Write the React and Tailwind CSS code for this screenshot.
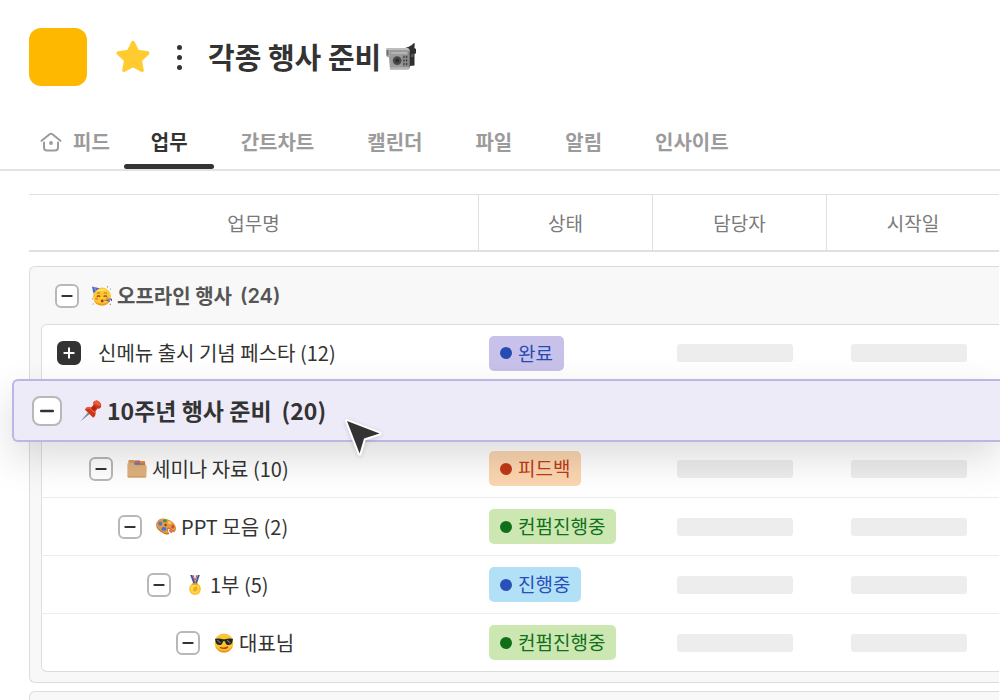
import React from 'react';
import { Minus, Plus } from 'lucide-react';

const TABS = ['업무', '간트차트', '캘린더', '파일', '알림', '인사이트'];

const STATUS_STYLES = {
    완료: { box: 'bg-[#c8c2ea] text-[#274bb5]', dot: 'bg-[#274bb5]' },
    피드백: { box: 'bg-[#fbd6b0] text-[#c03a16]', dot: 'bg-[#c03a16]' },
    컨펌진행중: { box: 'bg-[#cce7b2] text-[#10701a]', dot: 'bg-[#10701a]' },
    진행중: { box: 'bg-[#b2e1f7] text-[#294fb9]', dot: 'bg-[#294fb9]' },
};

const ROW_GRID = 'grid grid-cols-[minmax(0,1fr)_174px_174px_173px]';

function StarIcon() {
    return (
        <svg viewBox="0 0 34 34" className="size-[34px]">
            <path
                d="M17 2.6L21.4 11.6L31.6 13.1L24.2 20.2L26 30.2L17 25.4L8 30.2L9.8 20.2L2.4 13.1L12.6 11.6Z"
                fill="#ffcb2e"
                stroke="#ffcb2e"
                strokeWidth="3.6"
                strokeLinejoin="round"
            />
        </svg>
    );
}

function HomeIcon() {
    return (
        <svg viewBox="0 0 22 20" className="h-5 w-[22px]" fill="none" stroke="currentColor" strokeWidth="2" strokeLinecap="round" strokeLinejoin="round">
            <path d="M1.5 8.8L9.6 2.3Q11 1.3 12.4 2.3L20.5 8.8" />
            <path d="M4 10.5V15.5Q4 18.5 7 18.5H15Q18 18.5 18 15.5V10.5" />
            <circle cx="11" cy="11" r="1.9" fill="currentColor" stroke="none" />
        </svg>
    );
}

function CameraIcon() {
    return (
        <svg viewBox="0 0 30 28" className="h-7 w-[30px]">
            <path d="M15 6Q24 4.5 28 0L28.8 .6L28.4 5L30 6V10.5L24 11L22 7Z" fill="#303030" />
            <path d="M23 9H28.5V22.5L24 23Z" fill="#2f2f2f" />
            <path d="M25 11H27.5V14H25Z" fill="#585858" />
            <path d="M.6 5H22L24 7.5V25L22.5 26.5H4L3 14.5L.6 13.5Z" fill="#9b9b9b" />
            <path d="M.6 5H22L23.6 7H3.4V13.8L.6 13Z" fill="#bdbdbd" />
            <path d="M.6 7H2.6V12.6H.6Z" fill="#6d6d6d" />
            <rect x="5" y="9" width="16" height="2" fill="#b4b4b4" />
            <circle cx="11.2" cy="17.6" r="4.4" fill="#4a4a4a" />
            <circle cx="11.2" cy="17.6" r="2" fill="#2d2d2d" />
            <rect x="16.4" y="12" width="5.6" height="11.6" fill="#858585" />
            <path d="M17.4 14H18.6M20 14H21.2M17.4 17.6H18.6M20 17.6H21.2M17.4 21H18.6M20 21H21.2" stroke="#2b2b2b" strokeWidth="1.5" />
            <path d="M4 24.2H23.8L22.5 26.5H4.2Z" fill="#b5b5b5" />
            <path d="M22.6 8.5H24V24H22.6Z" fill="#707070" />
        </svg>
    );
}

function PartyIcon() {
    return (
        <svg viewBox="0 0 20 20" className="size-5">
            <circle cx="10" cy="10.6" r="9" fill="#fdc72f" />
            <path d="M1.8 14.5Q4.5 19.6 10 19.6Q15.5 19.6 18.2 14.5Q14.5 18 10 17.8Q5.6 17.8 1.8 14.5Z" fill="#ee9c1e" />
            <path d="M4 5.6Q9.5 1 16 4.6Q10 4 4 5.6Z" fill="#ffe590" />
            <path d="M0 .4L7.6 2.2Q3.6 4 1.4 7.4Z" fill="#4d68c9" />
            <path d="M2.2 1.2L4 4.6" stroke="#8fa7ed" strokeWidth="1" />
            <path d="M5 7.4Q6.5 6.4 8.2 7.2M11.8 7.2Q13.5 6.4 15 7.4" stroke="#b8741d" fill="none" />
            <path d="M4.8 10.6Q6.5 9.3 8.2 10.6M11.6 10.6Q13.3 9.3 15 10.6" stroke="#8c3a14" strokeWidth="1.3" fill="none" />
            <circle cx="4.6" cy="12.8" r="1.4" fill="#f38b37" />
            <circle cx="15.4" cy="12.6" r="1.4" fill="#f38b37" />
            <circle cx="10.2" cy="15" r="1.4" fill="#a8371b" />
            <path d="M11.4 14L17.5 13.4L18 16Z" fill="#536cc5" />
            <path d="M17.4 13.2Q20.5 12.5 19.5 15" stroke="#4157b4" strokeWidth="1.3" fill="none" />
            <path d="M15 .8H16M.6 18H1.6M17.8 18.4H18.8" stroke="#df5432" strokeWidth="1.2" />
            <path d="M18 3H19M.2 12.8H1" stroke="#50a5d0" strokeWidth="1.2" />
        </svg>
    );
}

function PinIcon() {
    return (
        <svg viewBox="0 0 22 22" className="size-[22px]">
            <path d="M.4 21.6L9 11L11 13Z" fill="#8291a5" />
            <path d="M13.2 2.2Q15.6 -.6 19 1.4Q22.4 4 20.7 7.4Q19.4 9 17.6 8.6L15.4 11.6Q16.4 16.2 13.2 17.8L4.8 9.4Q7 6.2 11 7.4L13.4 5Z" fill="#ce3519" />
            <path d="M13.2 2.2Q15.6 -.6 19 1.4L20.8 3.4Q21.2 6 19.4 6.2L15 4.2Z" fill="#ec5c38" />
            <path d="M6 8.6Q8.6 7.4 10.6 8.8L14.6 12.8" stroke="#ec5c38" strokeWidth="1.4" fill="none" />
            <path d="M11.4 8.4L14 5.4L16.4 8.2L13.8 11Z" fill="#ae2713" />
        </svg>
    );
}

function FolderIcon() {
    return (
        <svg viewBox="0 0 20 20" className="size-5">
            <path d="M1.4 2Q1.4 1 2.4 1H7L8 2.4H18V8H1.4Z" fill="#d39c62" />
            <path d="M7.6 1.6H13V3.4H7.6ZM13.8 4.4H18.4V5.8H13.8Z" fill="#df5a3a" />
            <path d="M7.4 3.8H13.4V5.8H7.4Z" fill="#527dcd" />
            <path d="M13 2.2H18V3.8H13Z" fill="#e7834a" />
            <path d="M.4 5.4Q.4 4 1.6 4H6.4L8 6.2H18.6Q19.8 6.2 19.7 7.6L19.4 17Q19.3 18.6 17.8 18.6H2Q.5 18.6 .4 17Z" fill="#dfb17c" />
            <path d="M.5 17H19.4Q19.3 18.6 17.8 18.6H2Q.6 18.6 .5 17Z" fill="#d3a06a" />
        </svg>
    );
}

function PaletteIcon() {
    return (
        <svg viewBox="0 0 20 20" className="size-5">
            <path d="M.3 6.8Q1.6 1.6 8 2Q15.3 2.8 18.9 8.3Q21 12.6 18.6 14.8Q16.6 15.6 15 13Q12.5 10.8 11.7 13Q11.7 15 13.5 16.6Q12.5 18.4 8.5 17Q-.8 12.8 .3 6.8Z" fill="#c17531" />
            <path d="M.6 5.8Q2.4 1 8 1.5Q15.3 2.3 18.9 7.8Q20.8 12 18.5 13.6Q17 14 15.4 11.8Q12.3 9.3 11 12Q10.8 14 12.6 15.7Q11.7 17 8.3 15.7Q0 11.8 .6 5.8Z" fill="#e39a48" />
            <ellipse cx="4.2" cy="6.6" rx="2" ry="2.2" fill="#4e78c9" />
            <ellipse cx="8.9" cy="3.7" rx="2" ry="1.5" fill="#309952" />
            <ellipse cx="13.6" cy="5.7" rx="1.8" ry="1.4" fill="#f5d04a" />
            <ellipse cx="16.8" cy="9.8" rx="1.6" ry="1.7" fill="#d8472e" />
            <ellipse cx="7.9" cy="11.9" rx="2.5" ry="1.9" fill="#4774cc" />
            <circle cx="9.6" cy="8" r="1.2" fill="#864818" />
            <path d="M13.4 13L16 15.5" stroke="#d9674d" strokeWidth="2.2" />
        </svg>
    );
}

function MedalIcon() {
    return (
        <svg viewBox="0 0 20 20" className="size-5">
            <path d="M5.4 0H14.6L11.7 8.6H8.4Z" fill="#e9ecf4" />
            <path d="M5.2 0H7.2L10.4 8H8.2Z" fill="#3457a9" />
            <path d="M12.9 0H14.8L11.9 8.4H10Z" fill="#3457a9" />
            <path d="M8 0L10.4 7M12 0L10.4 5" stroke="#dc5140" strokeWidth="1" />
            <circle cx="10" cy="14" r="5.9" fill="#fac42d" />
            <circle cx="10" cy="14" r="4.2" fill="#ffda58" />
            <path d="M7.4 8.8H12.6" stroke="#d99613" strokeWidth="1.7" />
            <path d="M7.5 15.6L9 12L11.8 11L12.8 14.6L10 17Z" fill="#edad1e" />
        </svg>
    );
}

function CoolIcon() {
    return (
        <svg viewBox="0 0 20 20" className="size-5">
            <circle cx="10" cy="10" r="9.4" fill="#fbc52c" />
            <path d="M1.4 13.4Q4 19.4 10 19.4Q16 19.4 18.6 13.4Q15 17.6 10 17.6Q5 17.6 1.4 13.4Z" fill="#e8951b" />
            <path d="M1 5.8Q5.5 5 9 6.2H11Q14.5 5 19 5.8L18.6 8Q18 12 14.5 12Q11.8 12 11 8.4Q10 7.6 9 8.4Q8.2 12 5.5 12Q2 12 1.4 8Z" fill="#252525" />
            <path d="M3.2 7.2L6.6 10M13 7.2L16.2 10" stroke="#777" strokeWidth="1.1" />
            <path d="M6.6 14.6Q10 16.2 13.4 14.2" stroke="#c0391b" strokeWidth="1.6" fill="none" strokeLinecap="round" />
        </svg>
    );
}

function CursorIcon() {
    return (
        <svg viewBox="0 0 44 44" className="size-11 drop-shadow-sm" aria-hidden="true">
            <path d="M5 5L37.6 17.6L22 22.6L17.6 37.6Z" fill="#333" stroke="#fff" strokeWidth="4" paintOrder="stroke" strokeLinejoin="round" />
        </svg>
    );
}

const ROWS = [
    { name: '신메뉴 출시 기념 페스타 (12)', status: '완료', closed: true, first: true, indent: 'pl-[15px]' },
    { name: '10주년 행사 준비', count: 20, dragging: true },
    { name: '세미나 자료 (10)', status: '피드백', icon: <FolderIcon />, indent: 'pl-[47px]' },
    { name: 'PPT 모음 (2)', status: '컨펌진행중', icon: <PaletteIcon />, indent: 'pl-[76px]' },
    { name: '1부 (5)', status: '진행중', icon: <MedalIcon />, indent: 'pl-[105px]' },
    { name: '대표님', status: '컨펌진행중', icon: <CoolIcon />, indent: 'pl-[134px]' },
];

function ToggleButton({ closed, label }) {
    return (
        <button
            type="button"
            aria-label={label}
            aria-expanded={!closed}
            className={`flex size-6 shrink-0 items-center justify-center rounded-md border-2 ${
                closed ? 'border-[#333] bg-[#333] text-white' : 'border-[#b8b8b8] bg-white text-[#333]'
            }`}
        >
            {closed ? <Plus className="size-4" strokeWidth={3} /> : <Minus className="size-4" strokeWidth={3} />}
        </button>
    );
}

function StatusBadge({ status }) {
    const styles = STATUS_STYLES[status];
    return (
        <span className={`flex h-[35px] items-center gap-1.5 rounded-[5px] px-[11px] text-[19px] ${styles.box}`}>
            <span className={`size-3 rounded-full ${styles.dot}`} />
            {status}
        </span>
    );
}

function TaskRow({ row }) {
    return (
        <tr
            className={`${ROW_GRID} ml-[11px] h-[58px] border-b border-l border-[#ececec] border-l-[#dedede] bg-white last:rounded-bl-md last:border-b-[#dcdcdc] ${
                row.first ? 'rounded-tl-md border-t border-t-[#dcdcdc]' : ''
            }`}
        >
            <td className={`flex items-center ${row.indent}`}>
                <ToggleButton closed={row.closed} label={row.name} />
                {row.icon && <span className="mr-[-12px] ml-[14px]">{row.icon}</span>}
                <span className="ml-[17px] text-xl text-[#333]">{row.name}</span>
            </td>
            <td className="flex items-center pl-[11px]">
                <StatusBadge status={row.status} />
            </td>
            <td className="flex items-center pl-[25px]">
                <span className="h-[18px] w-[116px] rounded-[3px] bg-[#ededed]" />
            </td>
            <td className="flex items-center pl-[25px]">
                <span className="h-[18px] w-[116px] rounded-[3px] bg-[#ededed]" />
            </td>
        </tr>
    );
}

function DraggedRow({ row }) {
    return (
        <tr className="relative z-10 -mt-[3px] -mr-px -mb-[2px] -ml-[18px] flex h-[63px] rounded-l-md border-y-2 border-l-2 border-[#c0b4e5] bg-[#eeebf9] shadow-[0_16px_40px_rgba(0,0,0,0.14)]">
            <td colSpan={4} className="flex items-center pl-[18px]">
                <button
                    type="button"
                    aria-label={row.name}
                    aria-expanded="true"
                    className="flex size-[30px] shrink-0 items-center justify-center rounded-lg border-2 border-[#b8b8b8] bg-white text-[#333]"
                >
                    <Minus className="size-5" strokeWidth={3} />
                </button>
                <span className="ml-[18px]">
                    <PinIcon />
                </span>
                <span className="ml-[5px] text-[23px] font-bold text-[#333]">{row.name}</span>
                <span className="ml-2.5 text-[23px] font-bold text-[#333]">({row.count})</span>
                <span className="pointer-events-none absolute top-[35px] left-[328px]">
                    <CursorIcon />
                </span>
            </td>
        </tr>
    );
}

export default function App() {
    return (
        <div className="h-screen overflow-hidden bg-white font-['Noto_Sans_CJK_KR','Noto_Sans',sans-serif]">
            <header className="flex items-center pt-7 pl-[29px]">
                <div className="size-[58px] rounded-xl bg-[#ffb800]" />
                <button type="button" aria-label="즐겨찾기" className="ml-[29px]">
                    <StarIcon />
                </button>
                <button type="button" aria-label="더보기" className="ml-6 flex w-[10px] flex-col items-center gap-[5px]">
                    <span className="size-[5px] rounded-full bg-[#333]" />
                    <span className="size-[5px] rounded-full bg-[#333]" />
                    <span className="size-[5px] rounded-full bg-[#333]" />
                </button>
                <h1 className="ml-6 flex items-center gap-[5px] text-[29px] font-bold text-[#333]">
                    각종 행사 준비
                    <CameraIcon />
                </h1>
            </header>

            <nav className="mt-[29px] flex h-14 border-b-2 border-[#e3e3e3] pl-10 text-xl font-bold text-[#9b9b9b]">
                <a href="#feed" className="flex items-center gap-[11px] pr-[14px]">
                    <HomeIcon />
                    피드
                </a>
                {TABS.map((tab) =>
                    tab === '업무' ? (
                        <a key={tab} href={`#${tab}`} aria-current="page" className="relative flex items-center pr-[26px] pl-[27px] text-[#333]">
                            {tab}
                            <span className="absolute inset-x-0 bottom-0 h-[5px] rounded-full bg-[#333]" />
                        </a>
                    ) : (
                        <a key={tab} href={`#${tab}`} className="flex items-center pr-[26px] pl-[27px]">
                            {tab}
                        </a>
                    )
                )}
            </nav>

            <main className="pt-[23px] pr-px pl-[29px]">
                <table className="block w-full">
                    <thead className="block">
                        <tr className={`${ROW_GRID} h-[58px] border-t border-b-2 border-[#e0e0e0] text-[19px] text-[#7a7a7a]`}>
                            {['업무명', '상태', '담당자', '시작일'].map((title) => (
                                <th key={title} scope="col" className="flex items-center justify-center border-[#e0e0e0] pt-0.5 font-normal not-first:border-l">
                                    {title}
                                </th>
                            ))}
                        </tr>
                    </thead>
                    <tbody className="mt-[14px] block rounded-l-md border-y border-l border-[#dcdcdc] bg-[#f8f8f8] pb-[10px]">
                        <tr className="flex h-[57px]">
                            <th scope="rowgroup" colSpan={4} className="flex items-center pl-[25px] text-xl font-bold text-[#555]">
                                <ToggleButton label="오프라인 행사" />
                                <span className="mr-[5px] ml-[13px]">
                                    <PartyIcon />
                                </span>
                                오프라인 행사
                                <span className="ml-2 font-['Inter',sans-serif] font-semibold">(24)</span>
                            </th>
                        </tr>
                        {ROWS.map((row) =>
                            row.dragging ? <DraggedRow key={row.name} row={row} /> : <TaskRow key={row.name} row={row} />
                        )}
                    </tbody>
                    <tbody className="mt-2 block h-10 rounded-tl-md border-t border-l border-[#dcdcdc] bg-[#f8f8f8]" />
                </table>
            </main>
        </div>
    );
}
